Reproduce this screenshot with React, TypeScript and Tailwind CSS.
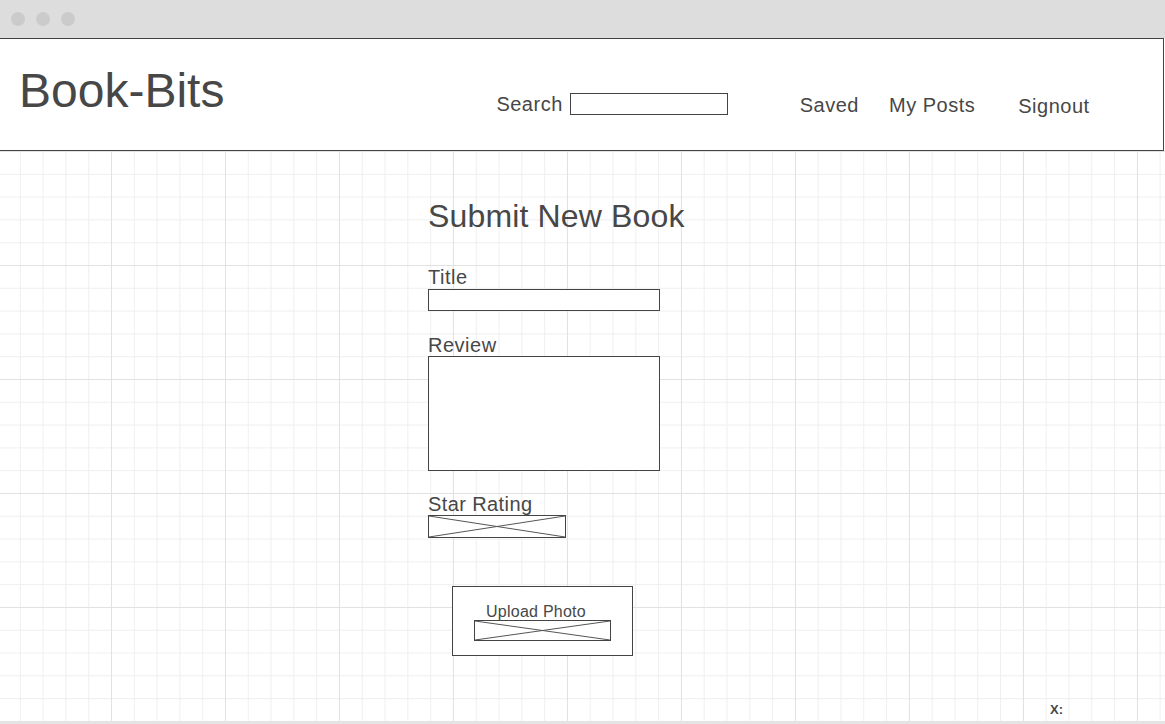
import React from "react";

function CrossBox({ w, h }: { w: string; h: string }) {
  return (
    <div className={`${w} ${h} border border-[#444] bg-white relative`}>
      <svg className="absolute inset-0 w-full h-full" preserveAspectRatio="none" viewBox="0 0 100 100">
        <line x1="0" y1="0" x2="100" y2="100" stroke="#555" strokeWidth="1" vectorEffect="non-scaling-stroke" />
        <line x1="100" y1="0" x2="0" y2="100" stroke="#555" strokeWidth="1" vectorEffect="non-scaling-stroke" />
      </svg>
    </div>
  );
}

export default function App() {
  return (
    <div className="w-[1165px] h-[724px] overflow-hidden flex flex-col bg-white text-[#474747] font-['Liberation_Sans',Arial,sans-serif]">
      {/* window chrome */}
      <div className="h-[38px] shrink-0 bg-[#dddddd] flex items-center gap-[11px] pl-[11px]">
        <div className="w-[14px] h-[14px] rounded-full bg-[#cbcbcb]" />
        <div className="w-[14px] h-[14px] rounded-full bg-[#cbcbcb]" />
        <div className="w-[14px] h-[14px] rounded-full bg-[#cbcbcb]" />
      </div>

      {/* header */}
      <header className="h-[113px] w-[1164px] shrink-0 border-t border-b border-r border-[#444] bg-white flex items-start">
        <div className="ml-[19px] mt-[28px] text-[48px] leading-[48px] whitespace-nowrap">Book-Bits</div>
        <div className="ml-[272px] mt-[54px] flex items-center">
          <span className="text-[20px] leading-[20px] tracking-[0.5px]">Search</span>
          <div className="ml-[7px] w-[158px] h-[22px] border border-[#444] bg-white" />
        </div>
        <span className="ml-[72px] mt-[56px] text-[20px] leading-[20px] tracking-[0.5px]">Saved</span>
        <span className="ml-[30px] mt-[56px] text-[20px] leading-[20px] tracking-[0.5px] whitespace-nowrap">My Posts</span>
        <span className="ml-[43px] mt-[57px] text-[20px] leading-[20px] tracking-[0.5px]">Signout</span>
      </header>

      {/* canvas */}
      <main className="relative flex-1 flex flex-col items-start pl-[428px] bg-white bg-[linear-gradient(to_right,#e2e2e2_1px,transparent_1px),linear-gradient(to_bottom,#e2e2e2_1px,transparent_1px),linear-gradient(to_right,#efefef_1px,transparent_1px),linear-gradient(to_bottom,#efefef_1px,transparent_1px)] bg-[size:114px_114px,114px_114px,22.8px_22.8px,22.8px_22.8px] bg-[position:-3px_0,-3px_0,-3px_0,-3px_0]">
        <h1 className="mt-[49px] text-[32px] leading-[32px] tracking-[0.15px] whitespace-nowrap">Submit New Book</h1>

        <label className="mt-[35px] text-[20px] leading-[20px] tracking-[0.5px]">Title</label>
        <div className="mt-[2px] w-[232px] h-[22px] border border-[#444] bg-white" />

        <label className="mt-[24px] text-[20px] leading-[20px] tracking-[0.5px]">Review</label>
        <div className="mt-[1px] w-[232px] h-[115px] border border-[#444] bg-white" />

        <label className="mt-[23px] text-[20px] leading-[20px] tracking-[0.4px] whitespace-nowrap">Star Rating</label>
        <div className="mt-[1px]">
          <CrossBox w="w-[138px]" h="h-[23px]" />
        </div>

        <div className="mt-[48px] ml-[24px] w-[181px] h-[70px] border border-[#444] bg-white flex flex-col items-start pt-[17px]">
          <span className="ml-[33px] text-[16px] leading-[16px] tracking-[0.25px] whitespace-nowrap">Upload Photo</span>
          <div className="ml-[21px]">
            <CrossBox w="w-[137px]" h="h-[21px]" />
          </div>
        </div>

        <span className="absolute left-[1050px] top-[552px] text-[13px] leading-[13px] font-bold">X:</span>
      </main>

      <div className="h-[3px] shrink-0 bg-[#e4e4e4]" />
    </div>
  );
}
